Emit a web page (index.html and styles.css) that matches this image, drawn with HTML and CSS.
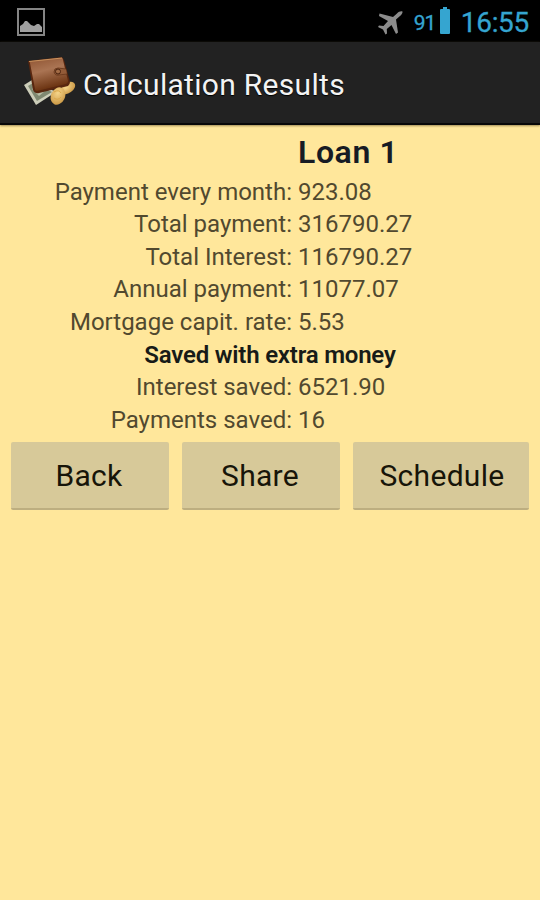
FILE: index.html
```
<!DOCTYPE html>
<html lang="en">
<head>
    <meta charset="UTF-8">
    <title>Calculation Results</title>
    <meta name="viewport" content="width=device-width, initial-scale=1">
    <link rel="stylesheet" href="styles.css">
</head>
<body>
    <div class="status-bar">
        <svg class="picture-icon" width="28" height="28" viewBox="0 0 28 28">
            <rect x="1" y="1" width="26" height="26" fill="none" stroke="#858585" stroke-width="2"/>
            <path d="M3 24v-6l3-2 2-3h2l4 4 3 1 3-2h2l3 3v5z" fill="#a0a0a0"/>
        </svg>
        <svg class="plane-icon" width="25" height="24" viewBox="0 0 25 24">
            <path d="M24.5 .5c-2-.5-4 .4-5.500 2l-4 3.500L1.500 2.500 1 5l9 5-4.500 5-4.500-.5L0 16l5 2.500 2.500 5 1.500-1-.2-4.500 4.700-4L18 23l2-1.500-2-13L22 5c1.700-1.500 2.700-3 2.500-4.500z" fill="#8c8c8c"/>
        </svg>
        <span class="battery-level">91</span>
        <svg class="battery-icon" width="10" height="27" viewBox="0 0 10 27">
            <path d="M3 0h4v2h2q1 0 1 1v23q0 1-1 1H1q-1 0-1-1V3q0-1 1-1h2z" fill="#35a5d0"/>
        </svg>
        <span class="clock">16:55</span>
    </div>
    <div class="action-bar">
        <svg class="app-icon" width="52" height="49" viewBox="0 0 52 49">
            <defs>
                <linearGradient id="leather" x1="0" y1="0" x2=".3" y2="1">
                    <stop offset="0" stop-color="#8f5432"/>
                    <stop offset=".45" stop-color="#aa7453"/>
                    <stop offset="1" stop-color="#69310f"/>
                </linearGradient>
                <radialGradient id="gold" cx=".4" cy=".35" r=".7">
                    <stop offset="0" stop-color="#f5d58a"/>
                    <stop offset="1" stop-color="#cb9844"/>
                </radialGradient>
            </defs>
            <path d="M0 28l8-5 24 12-20 13z" fill="#cccdb9"/>
            <path d="M4 29l5-3 19 9-15 9z" fill="#7f8871"/>
            <path d="M8 32l4-3 9 5-6 5z" fill="#b8bea5"/>
            <ellipse cx="44" cy="31" rx="8" ry="5" fill="url(#gold)" transform="rotate(-35 44 31)"/>
            <path d="M4 4L38 0l2 3 6 22q0 2-2 4L15 36q-4 1-6-3L5 9z" fill="#59270f"/>
            <path d="M7 4l31-3q1 0 1 2l5 21q0 2-2 3l-29 7q-2 0-2-2L6 6q-1-2 1-2z" fill="url(#leather)"/>
            <path d="M5 4.500L38 1" stroke="#c9925e" stroke-width="1.200"/>
            <path d="M42 12l-8-1q-4 0-4 4 1 4 5 3l8-1" fill="#925b38" stroke="#653519" stroke-width=".8"/>
            <circle cx="34" cy="14.500" r="2.500" fill="#a26b45" stroke="#4b230f"/>
            <ellipse cx="34" cy="39" rx="7" ry="9" fill="url(#gold)" transform="rotate(25 34 39)"/>
            <path d="M30 35q5-3 7 1M30 41q4 3 7-1" fill="none" stroke="#dba84a"/>
        </svg>
        <h1>Calculation Results</h1>
    </div>
    <div class="results">
        <div class="row title"><span></span><strong>Loan 1</strong></div>
        <div class="row"><span>Payment every month:</span><span class="value">923.08</span></div>
        <div class="row"><span>Total payment:</span><span class="value">316790.27</span></div>
        <div class="row"><span>Total Interest:</span><span class="value">116790.27</span></div>
        <div class="row"><span>Annual payment:</span><span class="value">11077.07</span></div>
        <div class="row"><span>Mortgage capit. rate:</span><span class="value">5.53</span></div>
        <div class="subtitle">Saved with extra money</div>
        <div class="row"><span>Interest saved:</span><span class="value">6521.90</span></div>
        <div class="row"><span>Payments saved:</span><span class="value">16</span></div>
    </div>
    <div class="buttons">
        <button type="button">Back</button>
        <button type="button">Share</button>
        <button type="button">Schedule</button>
    </div>
</body>
</html>
```

FILE: styles.css
```
* { box-sizing: border-box; }
body {
    margin: 0;
    min-height: 900px;
    background: #ffe79b;
    font-family: Roboto, sans-serif;
    color: #222;
}
.status-bar {
    display: flex;
    align-items: center;
    height: 42px;
    padding: 0 11px 0 17px;
    background: #000;
    color: #35a5d0;
}
.picture-icon { margin-top: 2px; }
.plane-icon { margin: 3px 11px 0 auto; }
.battery-level { font-size: 21px; margin: 4px 5px 0 0; width: 21px; letter-spacing: -1px; -webkit-text-stroke: .3px #35a5d0; }
.battery-icon { margin: -1px 11px 0 0; }
.clock { font-size: 28px; margin-top: 3px; letter-spacing: -.3px; -webkit-text-stroke: .3px #35a5d0; }
.action-bar {
    display: flex;
    align-items: center;
    height: 83px;
    padding-left: 24px;
    background: #222;
    border-bottom: 2px solid #080808;
    box-shadow: 0 1px 2px #a08c55;
}
.app-icon { margin-top: -3px; }
h1 {
    margin: 4px 0 0 7px;
    color: #f3f3f3;
    font-size: 30px;
    font-weight: 400;
    letter-spacing: .3px;
    text-shadow: 0 1px 1px #000;
}
.results {
    padding-top: 7px;
    font-size: 24px;
    line-height: 32.65px;
}
.row {
    display: grid;
    grid-template-columns: 292px 1fr;
    column-gap: 6px;
    height: 32.65px;
    color: #51492f;
}
.row span:first-child { text-align: right; }
.row.title {
    height: 43.5px;
    color: #171b24;
    font-size: 32px;
    line-height: 40px;
    letter-spacing: .6px;
}
.title strong { font-weight: 600; }
.subtitle {
    height: 32.65px;
    text-align: center;
    font-weight: 600;
    letter-spacing: -.2px;
    color: #171b18;
}
.buttons {
    display: flex;
    gap: 13px;
    padding: 5.5px 11px 0;
}
.buttons button {
    height: 68px;
    width: 158px;
    padding: 1px 2px 0 0;
    border: 0;
    border-bottom: 2px solid #bdae80;
    border-radius: 2px;
    background: #d7c999;
    color: #171509;
    font: 400 30px Roboto, sans-serif;
    letter-spacing: .3px;
}
.buttons button:last-child { width: 176px; padding: 1px 0 0 2px; }
```
